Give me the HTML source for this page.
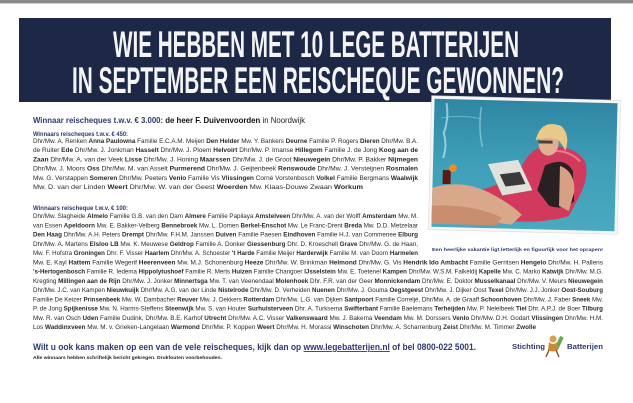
<!DOCTYPE html>
<html><head><meta charset="utf-8"><style>
html,body{margin:0;padding:0;background:#fff;}
svg{display:block;}
text{font-family:"Liberation Sans Narrow","Liberation Sans",sans-serif;}
.b{font-weight:bold;}
.t{font-size:6.2px;fill:#2a2a2a;}
.h{font-size:6.4px;font-weight:bold;fill:#2d3a6e;}
</style></head><body>
<svg width="633" height="403" viewBox="0 0 633 403" xmlns="http://www.w3.org/2000/svg">
<rect x="0" y="0" width="633" height="403" fill="#ffffff"/>
<rect x="0" y="0" width="633" height="3" fill="#8a8a8a"/>
<rect x="0" y="3" width="633" height="1" fill="#cfcfcf"/>
<!-- banner -->
<rect x="19" y="18" width="592" height="84" fill="#1d2746"/>
<text x="113" y="57" font-size="37" font-weight="bold" fill="#f4f4f4" textLength="406" lengthAdjust="spacingAndGlyphs">WIE HEBBEN MET 10 LEGE BATTERIJEN</text>
<text x="72" y="93" font-size="37" font-weight="bold" fill="#f4f4f4" textLength="492" lengthAdjust="spacingAndGlyphs">IN SEPTEMBER EEN REISCHEQUE GEWONNEN?</text>

<!-- winner -->
<text x="33" y="123" font-size="8.3" textLength="272" lengthAdjust="spacingAndGlyphs"><tspan class="b" fill="#2d3a6e">Winnaar reischeques t.w.v. € 3.000:</tspan><tspan class="b" fill="#111"> de heer F. Duivenvoorden</tspan><tspan fill="#222"> in Noordwijk</tspan></text>

<text class="h" x="33" y="136" textLength="95" lengthAdjust="spacingAndGlyphs">Winnaars reischeques t.w.v. € 450:</text>
<g class="t">
<text x="33" y="143" textLength="385" lengthAdjust="spacingAndGlyphs">Dhr/Mw. A. Renken <tspan class="b">Anna Paulowna</tspan> Familie E.C.A.M. Meijen <tspan class="b">Den Helder</tspan> Mw. Y. Bankers <tspan class="b">Deurne</tspan> Familie P. Rogers <tspan class="b">Dieren</tspan> Dhr/Mw. B.A.</text>
<text x="33" y="152.2" textLength="385" lengthAdjust="spacingAndGlyphs">de Ruiter <tspan class="b">Ede</tspan> Dhr/Mw. J. Jonkman <tspan class="b">Hasselt</tspan> Dhr/Mw. J. Ploem <tspan class="b">Helvoirt</tspan> Dhr/Mw. P. Imanse <tspan class="b">Hillegom</tspan> Familie J. de Jong <tspan class="b">Koog aan de</tspan></text>
<text x="33" y="161.4" textLength="385" lengthAdjust="spacingAndGlyphs"><tspan class="b">Zaan</tspan> Dhr/Mw. A. van der Veek <tspan class="b">Lisse</tspan> Dhr/Mw. J. Honing <tspan class="b">Maarssen</tspan> Dhr/Mw. J. de Groot <tspan class="b">Nieuwegein</tspan> Dhr/Mw. P. Bakker <tspan class="b">Nijmegen</tspan></text>
<text x="33" y="170.6" textLength="385" lengthAdjust="spacingAndGlyphs">Dhr/Mw. J. Moors <tspan class="b">Oss</tspan> Dhr/Mw. M. van Asselt <tspan class="b">Purmerend</tspan> Dhr/Mw. J. Geijtenbeek <tspan class="b">Renswoude</tspan> Dhr/Mw. J. Versteijnen <tspan class="b">Rosmalen</tspan></text>
<text x="33" y="179.8" textLength="385" lengthAdjust="spacingAndGlyphs">Mw. G. Verstappen <tspan class="b">Someren</tspan> Dhr/Mw. Peeters <tspan class="b">Venlo</tspan> Familie Vis <tspan class="b">Vlissingen</tspan> Corné Vorstenbosch <tspan class="b">Volkel</tspan> Familie Bergmans <tspan class="b">Waalwijk</tspan></text>
<text x="33" y="189" textLength="330" lengthAdjust="spacingAndGlyphs">Mw. D. van der Linden <tspan class="b">Weert</tspan> Dhr/Mw. W. van der Geest <tspan class="b">Woerden</tspan> Mw. Klaas-Douwe Zwaan <tspan class="b">Workum</tspan></text>
</g>

<text class="h" x="33" y="210" textLength="95" lengthAdjust="spacingAndGlyphs">Winnaars reischeque t.w.v. € 100:</text>
<g class="t">
<text x="33" y="218" textLength="385" lengthAdjust="spacingAndGlyphs">Dhr/Mw. Slagheide <tspan class="b">Almelo</tspan> Familie G.B. van den Dam <tspan class="b">Almere</tspan> Familie Papilaya <tspan class="b">Amstelveen</tspan> Dhr/Mw. A. van der Wolff <tspan class="b">Amsterdam</tspan> Mw. M.</text>
<text x="33" y="227.25" textLength="385" lengthAdjust="spacingAndGlyphs">van Essen <tspan class="b">Apeldoorn</tspan> Mw. E. Bakker-Velberg <tspan class="b">Bennebroek</tspan> Mw. L. Domen <tspan class="b">Berkel-Enschot</tspan> Mw. Le Franc-Drent <tspan class="b">Breda</tspan> Mw. D.D. Metzelaar</text>
<text x="33" y="236.5" textLength="385" lengthAdjust="spacingAndGlyphs"><tspan class="b">Den Haag</tspan> Dhr/Mw. A.H. Peters <tspan class="b">Drempt</tspan> Dhr/Mw. F.H.M. Janssen <tspan class="b">Duiven</tspan> Familie Paesen <tspan class="b">Eindhoven</tspan> Familie H.J. van Commenee <tspan class="b">Elburg</tspan></text>
<text x="33" y="245.75" textLength="385" lengthAdjust="spacingAndGlyphs">Dhr/Mw. A. Martens <tspan class="b">Elsloo LB</tspan> Mw. K. Meuwese <tspan class="b">Geldrop</tspan> Familie A. Donker <tspan class="b">Giessenburg</tspan> Dhr. D. Kroeschell <tspan class="b">Grave</tspan> Dhr/Mw. G. de Haan,</text>
<text x="33" y="255" textLength="385" lengthAdjust="spacingAndGlyphs">Mw. F. Hofstra <tspan class="b">Groningen</tspan> Dhr. F. Visser <tspan class="b">Haarlem</tspan> Dhr/Mw. A. Schoester <tspan class="b">'t Harde</tspan> Familie Meijer <tspan class="b">Harderwijk</tspan> Familie M. van Doorn <tspan class="b">Harmelen</tspan></text>
<text x="33" y="264.25" textLength="570" lengthAdjust="spacingAndGlyphs">Mw. E. Kayl <tspan class="b">Hattem</tspan> Familie Wegerif <tspan class="b">Heerenveen</tspan> Mw. M.J. Schonenburg <tspan class="b">Heeze</tspan> Dhr/Mw. W. Brinkman <tspan class="b">Helmond</tspan> Dhr/Mw. G. Vis <tspan class="b">Hendrik Ido Ambacht</tspan> Familie Gerritsen <tspan class="b">Hengelo</tspan> Dhr/Mw. H. Pallens</text>
<text x="33" y="273.5" textLength="570" lengthAdjust="spacingAndGlyphs"><tspan class="b">'s-Hertogenbosch</tspan> Familie R. Iedema <tspan class="b">Hippolytushoef</tspan> Familie R. Merts <tspan class="b">Huizen</tspan> Familie Changoer <tspan class="b">IJsselstein</tspan> Mw. E. Toetenel <tspan class="b">Kampen</tspan> Dhr/Mw. W.S.M. Falkeldij <tspan class="b">Kapelle</tspan> Mw. C. Marko <tspan class="b">Katwijk</tspan> Dhr/Mw. M.G.</text>
<text x="33" y="282.75" textLength="570" lengthAdjust="spacingAndGlyphs">Kregting <tspan class="b">Millingen aan de Rijn</tspan> Dhr/Mw. J. Jonker <tspan class="b">Minnertsga</tspan> Mw. T. van Veenendaal <tspan class="b">Molenhoek</tspan> Dhr. F.R. van der Geer <tspan class="b">Monnickendam</tspan> Dhr/Mw. E. Doktor <tspan class="b">Musselkanaal</tspan> Dhr/Mw. V. Meurs <tspan class="b">Nieuwegein</tspan></text>
<text x="33" y="292" textLength="570" lengthAdjust="spacingAndGlyphs">Dhr/Mw. J.C. van Kampen <tspan class="b">Nieuwkuijk</tspan> Dhr/Mw. A.G. van der Linde <tspan class="b">Nistelrode</tspan> Dhr/Mw. D. Verheiden <tspan class="b">Nuenen</tspan> Dhr/Mw. J. Gouma <tspan class="b">Oegstgeest</tspan> Dhr/Mw. J. Dijker Oost <tspan class="b">Texel</tspan> Dhr/Mw. J.J. Jonker <tspan class="b">Oost-Souburg</tspan></text>
<text x="33" y="301.25" textLength="570" lengthAdjust="spacingAndGlyphs">Familie De Keizer <tspan class="b">Prinsenbeek</tspan> Mw. W. Dambacher <tspan class="b">Reuver</tspan> Mw. J. Dekkers <tspan class="b">Rotterdam</tspan> Dhr/Mw. L.G. van Dijken <tspan class="b">Santpoort</tspan> Familie Correljé, Dhr/Mw. A. de Graaff <tspan class="b">Schoonhoven</tspan> Dhr/Mw. J. Faber <tspan class="b">Sneek</tspan> Mw.</text>
<text x="33" y="310.5" textLength="570" lengthAdjust="spacingAndGlyphs">P. de Jong <tspan class="b">Spijkenisse</tspan> Mw. N. Harms-Steffens <tspan class="b">Steenwijk</tspan> Mw. S. van Houter <tspan class="b">Surhuisterveen</tspan> Dhr. A. Turksema <tspan class="b">Swifterbant</tspan> Familie Baelemans <tspan class="b">Terheijden</tspan> Mw. P. Nelelbeek <tspan class="b">Tiel</tspan> Dhr. A.P.J. de Boer <tspan class="b">Tilburg</tspan></text>
<text x="33" y="319.75" textLength="570" lengthAdjust="spacingAndGlyphs">Mw. R. van Osch <tspan class="b">Uden</tspan> Familie Dudink, Dhr/Mw. B.E. Karhof <tspan class="b">Utrecht</tspan> Dhr/Mw. A.C. Visser <tspan class="b">Valkenswaard</tspan> Mw. J. Bakema <tspan class="b">Veendam</tspan> Mw. M. Dorssers <tspan class="b">Venlo</tspan> Dhr/Mw. D.H. Godart <tspan class="b">Vlissingen</tspan> Dhr/Mw. H.M.</text>
<text x="33" y="329" textLength="503" lengthAdjust="spacingAndGlyphs">Los <tspan class="b">Waddinxveen</tspan> Mw. M. v. Grieken-Langelaan <tspan class="b">Warmond</tspan> Dhr/Mw. P. Koppen <tspan class="b">Weert</tspan> Dhr/Mw. H. Morassi <tspan class="b">Winschoten</tspan> Dhr/Mw. A. Scharrenburg <tspan class="b">Zeist</tspan> Dhr/Mw. M. Timmer <tspan class="b">Zwolle</tspan></text>
</g>

<!-- photo -->
<g transform="rotate(1.4 525 165)">
<rect x="430" y="98" width="189" height="134" fill="#f6f6f6" stroke="#d8d8d8" stroke-width="0.6"/>
<defs><linearGradient id="pool" x1="0" y1="0" x2="0" y2="1"><stop offset="0" stop-color="#2f86a3"/><stop offset="0.5" stop-color="#3f9fb8"/><stop offset="1" stop-color="#4aa9c0"/></linearGradient></defs>
<rect x="433" y="101" width="183" height="128" fill="url(#pool)"/>
<path d="M445 105 q3 15 -2 30 q4 12 0 25" stroke="#bfe6ef" stroke-width="2" fill="none" opacity="0.7"/>
<path d="M480 108 q-3 20 2 40" stroke="#a8dbe6" stroke-width="1.5" fill="none" opacity="0.6"/>
<path d="M440 120 q20 -4 40 0" stroke="#8fd0de" stroke-width="1" fill="none" opacity="0.6"/>
<path d="M520 170 q10 -25 30 -25 q25 0 35 15 q5 15 -5 35 l-10 20 q-30 10 -80 5 l-30 -5 l0 -20 q40 -5 60 -25z" fill="#d13a5c"/>
<path d="M545 152 q20 -6 35 8" stroke="#ea7a92" stroke-width="2" fill="none"/>
<path d="M433 190 q30 -10 60 5 q20 10 30 20 l-10 10 q-40 -5 -80 -5z" fill="#d9a88a"/>
<path d="M433 208 q40 -3 70 10 l-5 8 l-65 0z" fill="#c98d70"/>
<path d="M545 165 q20 -10 28 5 l2 30 q-10 10 -25 5 l-12 -15z" fill="#2a1f22"/>
<path d="M560 165 q15 5 15 25 l-5 20 l-10 -5z" fill="#d6a084"/>
<ellipse cx="548" cy="143" rx="10" ry="12" fill="#e0b092"/>
<path d="M535 140 q5 -22 25 -15 q10 8 5 25 q-5 -10 -10 -12 q-10 -2 -20 2z" fill="#e8c98a"/>
<rect x="538" y="140" width="14" height="3" fill="#2a2020" opacity="0.8"/>
<path d="M488 165 l30 -5 l15 30 l-30 6z" fill="#dfe3dc"/>
<path d="M500 175 l20 -3 l6 12 l-20 3z" fill="#3a3a3a"/>
<rect x="443" y="172" width="8" height="14" fill="#5a1c12"/>
<circle cx="453" cy="170" r="4" fill="#f08a2a"/>
</g>
<text x="432" y="251" font-size="4.6" class="b" fill="#2d3a6e" textLength="171" lengthAdjust="spacingAndGlyphs">Een heerlijke vakantie ligt letterlijk en figuurlijk voor het oprapen!</text>

<!-- footer -->
<text x="33" y="350" font-size="9" class="b" fill="#2d3a6e" textLength="443" lengthAdjust="spacingAndGlyphs">Wilt u ook kans maken op een van de vele reischeques, kijk dan op <tspan text-decoration="underline">www.legebatterijen.nl</tspan> of bel 0800-022 5001.</text>
<text x="33" y="359" font-size="4.5" class="b" fill="#222" textLength="189" lengthAdjust="spacingAndGlyphs">Alle winnaars hebben schriftelijk bericht gekregen. Drukfouten voorbehouden.</text>

<!-- logo -->
<text x="512" y="349" font-size="7.5" class="b" fill="#2d3a6e" textLength="33" lengthAdjust="spacingAndGlyphs">Stichting</text>
<text x="567" y="349" font-size="7.5" class="b" fill="#2d3a6e" textLength="36" lengthAdjust="spacingAndGlyphs">Batterijen</text>
<g>
<rect x="557" y="336" width="4" height="14" rx="1" transform="rotate(25 559 343)" fill="#6aa84f"/>
<circle cx="553" cy="339" r="3.5" fill="#d9a24a"/>
<path d="M549 342 q4 4 8 0 l1 8 q-5 3 -10 0z" fill="#c98a3a"/>
<path d="M549 350 l-3 7 M556 350 l3 7" stroke="#8a5a2a" stroke-width="1.5"/>
</g>
</svg>
</body></html>
